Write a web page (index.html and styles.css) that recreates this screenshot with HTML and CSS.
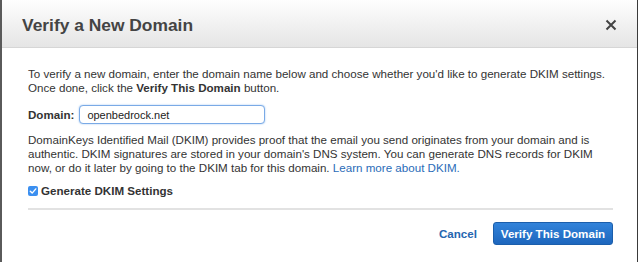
FILE: index.html
```html
<!DOCTYPE html>
<html lang="en">
<head>
    <meta charset="UTF-8">
    <title>Verify a New Domain</title>
    <link rel="stylesheet" href="styles.css">
</head>
<body>
    <div class="dialog">
        <header class="dialog-header">
            <h1 class="dialog-title">Verify a New Domain</h1>
            <button class="close-btn" aria-label="Close">
                <svg width="12" height="12" viewBox="0 0 12 12">
                    <path d="M1.5 1.5 L10.5 10.5 M10.5 1.5 L1.5 10.5" stroke="#444" stroke-width="2" fill="none"/>
                </svg>
            </button>
        </header>

        <div class="dialog-body">
            <p class="intro">To verify a new domain, enter the domain name below and choose whether you'd like to generate DKIM settings. Once done, click the <b>Verify This Domain</b> button.</p>

            <div class="field-row">
                <label class="field-label" for="domain">Domain:</label>
                <input class="field-input" id="domain" type="text" value="openbedrock.net">
            </div>

            <p class="dkim-info">DomainKeys Identified Mail (DKIM) provides proof that the email you send originates from your domain and is authentic. DKIM signatures are stored in your domain's DNS system. You can generate DNS records for DKIM now, or do it later by going to the DKIM tab for this domain. <a href="#" class="link">Learn more about DKIM.</a></p>

            <label class="check-row">
                <span class="checkbox">
                    <svg width="10" height="10" viewBox="0 0 10 10">
                        <path d="M2.3 5.2 L4.2 7.1 L7.8 2.9" stroke="#fff" stroke-width="1.4" fill="none" stroke-linecap="round" stroke-linejoin="round"/>
                    </svg>
                </span>
                Generate DKIM Settings
            </label>

            <div class="divider"></div>

            <div class="actions">
                <a href="#" class="cancel-btn">Cancel</a>
                <button class="primary-btn">Verify This Domain</button>
            </div>
        </div>
    </div>
</body>
</html>
```

FILE: styles.css
```css
body {
    margin: 0;
    background: #fff;
    font-family: 'Liberation Sans', Arial, sans-serif;
    color: #333;
    font-size: 11.6px;
    line-height: 14px;
}

.dialog {
    width: 635px;
    height: 262px;
    border-left: 2px solid #5a5a5a;
    border-right: 1px solid #3a3a3a;
    background: #fff;
    overflow: hidden;
}

/* Шапка */
.dialog-header {
    height: 47px;
    display: flex;
    align-items: center;
    justify-content: space-between;
    padding: 0 20px 0 20px;
    background: linear-gradient(#fefefe, #e5e5e5);
    border-bottom: 1px solid #d6d6d6;
}

.dialog-title {
    margin: 0;
    font-size: 17.4px;
    font-weight: bold;
    color: #444;
    padding-top: 3px;
}

.close-btn {
    background: none;
    border: none;
    padding: 0;
    display: flex;
    margin-top: 3px;
    cursor: pointer;
}

/* Содержимое */
.dialog-body {
    padding: 19px 24px 0 26px;
}

.intro,
.dkim-info {
    margin: 0;
}

.field-row {
    display: flex;
    align-items: center;
    gap: 5px;
    margin: 10px 0 9px;
}

.field-label {
    font-weight: bold;
}

.field-input {
    width: 173px;
    height: 17px;
    padding: 0 4px 0 7px;
    border: 1px solid #7aaae6;
    border-radius: 4px;
    box-shadow: 0 0 2px #9cc3f0;
    font-family: inherit;
    font-size: 11px;
    color: #222;
    outline: none;
}

.link {
    color: #2a6cb8;
    text-decoration: none;
}

.check-row {
    display: flex;
    align-items: center;
    gap: 3px;
    margin-top: 9px;
    font-weight: bold;
}

.checkbox {
    width: 10px;
    height: 10px;
    border-radius: 2px;
    background: #3b8ff0;
    display: flex;
}

.divider {
    height: 2px;
    background: #e2e2e2;
    margin-top: 10px;
}

.actions {
    display: flex;
    justify-content: flex-end;
    align-items: center;
    gap: 16px;
    margin-top: 12px;
}

.cancel-btn {
    color: #2566b0;
    font-weight: bold;
    text-decoration: none;
}

.primary-btn {
    width: 120px;
    height: 23px;
    padding: 0;
    white-space: nowrap;
    border: 1px solid #1b5eab;
    border-radius: 3px;
    background: linear-gradient(#3283da, #1d66bd);
    color: #fff;
    font-family: inherit;
    font-size: 11.6px;
    font-weight: bold;
    cursor: pointer;
}
```
